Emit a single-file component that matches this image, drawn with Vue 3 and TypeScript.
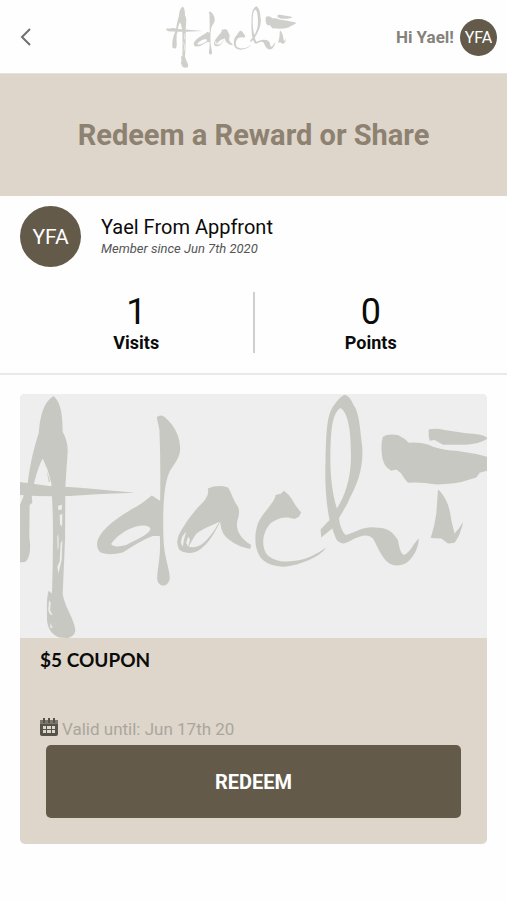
<script setup lang="ts">
interface Stat {
  label: string
  value: number
}

const member = {
  firstName: 'Yael',
  fullName: 'Yael From Appfront',
  initials: 'YFA',
  since: 'Jun 7th 2020',
}

const stats: Stat[] = [
  { label: 'Visits', value: 1 },
  { label: 'Points', value: 0 },
]

const coupon = { title: '$5 COUPON', validUntil: 'Jun 17th 20' }

// Brush strokes of the Adachi mark, shared by the header and the coupon picture.
const brushStrokes: string[] = [
  'M162 48C180 62 190 90 190 155Q206 185 205 215L198 320L197 480L190 640C195 680 225 715 228 750C225 770 210 775 190 773C165 772 145 750 143 720C143 690 141 650 148 632L158 640C160 560 162 480 160 400L156 310L145 270L130 235C115 265 105 300 97 345L99 368L91 375L90 470Q98 530 78 545Q60 550 40 535Q32 440 70 355L85 310C92 250 105 200 118 160C122 110 130 70 162 48ZM176 378L188 374L187 388L177 390ZM181 405L189 402L188 440L182 432ZM174 470L177 462L178 500L175 510ZM184 490L189 480L187 540L182 560L177 580L174 560L181 545ZM149 660L154 668L152 690L160 705L152 702L147 690ZM152 728L160 742L154 744ZM142 270L152 304L148 306Z',
  'M-35 318Q-20 295 0 312Q40 300 62 306L150 318Q240 322 300 328L408 338Q320 340 260 345Q160 352 62 345L10 345Q-20 345 -35 318Z',
  'M472 112Q485 98 505 120C530 145 543 175 542 210C540 245 510 260 502 300C492 340 490 400 492 470C493 530 510 560 511 595C508 612 498 617 488 616Q474 612 473 595C474 560 485 530 481 468L460 468C430 478 400 500 370 517Q330 527 305 518Q288 505 295 480C310 440 360 410 400 385C430 370 445 355 457 346L482 362Q484 250 480 150ZM335 492C350 470 380 445 420 437Q450 433 453 447C450 462 410 480 380 495Q345 505 335 492Z',
  'M625 325Q655 312 685 322C695 335 695 345 712 375Q722 385 717 410C705 440 715 470 755 495L752 507Q715 500 690 480Q665 465 662 425C640 470 620 500 590 515Q560 525 540 510Q528 490 538 465C555 430 590 385 612 365Q630 345 625 325ZM660 425C640 435 610 445 590 462Q575 485 568 500Q590 505 610 490Q635 470 660 425ZM560 454L548 470L544 488L550 500L553 482ZM566 470L560 488L566 500L572 478Z',
  'M828 345L845 340L853 332L868 345C880 360 885 375 905 397L898 410L885 417C860 408 840 412 815 428C792 450 783 490 800 520C815 540 850 548 880 543C930 538 960 515 980 502C970 520 930 545 870 558Q820 565 790 540C765 515 762 470 775 430C790 395 825 370 828 345Z',
  'M1035 44Q1050 46 1062 75C1080 100 1080 140 1088 200C1092 260 1075 310 1050 355C1040 380 1025 400 1018 415C1022 440 1030 460 1040 465C1070 455 1090 440 1125 442C1165 442 1180 455 1195 480C1200 510 1205 520 1212 525C1235 515 1240 490 1258 475C1255 510 1240 530 1225 545Q1205 560 1180 555C1150 545 1140 510 1120 475Q1105 460 1080 470C1060 475 1045 490 1030 490Q1010 485 1007 470L998 445L965 472L963 448L990 420C980 370 975 310 978 240C980 170 980 110 1000 80Q1020 50 1035 44ZM1022 84C1000 100 995 140 993 200C990 280 998 340 1012 385C1035 350 1052 300 1054 240C1055 170 1050 100 1022 84Z',
  'M1150 170Q1165 160 1195 165Q1215 175 1228 188Q1270 185 1300 200Q1340 212 1370 212L1430 222L1462 230Q1500 232 1510 245L1490 255L1462 272L1440 278L1430 292L1405 300Q1370 313 1310 313Q1260 305 1225 308Q1210 290 1205 280L1190 268L1175 272Q1150 260 1147 225Q1143 190 1150 170Z',
  'M1288 148Q1310 143 1335 150L1400 160Q1450 162 1465 175Q1440 192 1400 194L1330 194L1305 180L1290 182Q1285 165 1288 148Z',
  'M1315 328C1340 350 1350 380 1355 420Q1362 450 1365 460Q1380 445 1390 425Q1385 460 1365 488L1345 490L1325 475L1293 474Q1305 440 1310 400Z',
]
</script>

<template>
  <div class="page">
    <header class="topbar">
      <button class="back" type="button" aria-label="Back">
        <svg viewBox="0 0 12 20" width="12" height="20" aria-hidden="true">
          <path d="M10 2 2 10l8 8" fill="none" stroke="currentColor" stroke-width="2" />
        </svg>
      </button>
      <svg class="logo" viewBox="-40 42 1550 735" role="img" aria-label="Adachi">
        <path v-for="(stroke, i) in brushStrokes" :key="i" :d="stroke" />
      </svg>
      <div class="greeting">
        <span>Hi {{ member.firstName }}!</span>
        <span class="avatar avatar-small">{{ member.initials }}</span>
      </div>
    </header>

    <main>
      <h1 class="banner">Redeem a Reward or Share</h1>

      <section class="profile">
        <div class="member">
          <span class="avatar">{{ member.initials }}</span>
          <div>
            <p class="name">{{ member.fullName }}</p>
            <p class="since">Member since {{ member.since }}</p>
          </div>
        </div>
        <dl class="stats">
          <div v-for="stat in stats" :key="stat.label" class="stat">
            <dt>{{ stat.label }}</dt>
            <dd>{{ stat.value }}</dd>
          </div>
        </dl>
      </section>

      <article class="coupon">
        <svg
          class="picture"
          viewBox="62 42 1400 732"
          preserveAspectRatio="xMidYMid slice"
          aria-hidden="true"
        >
          <path v-for="(stroke, i) in brushStrokes" :key="i" :d="stroke" />
        </svg>
        <div class="details">
          <h2>{{ coupon.title }}</h2>
          <p class="valid">
            <svg viewBox="0 0 18 18" width="18" height="18" aria-hidden="true">
              <path fill="#7b786e" d="M0 2h18v5H0z" />
              <path
                fill="#55534b"
                fill-rule="evenodd"
                d="M3 0h2v5H3zM8 0h2v5H8zM13 0h2v5h-2zM0 6h18v10a2 2 0 0 1-2 2H2a2 2 0 0 1-2-2zM3 8v3h3V8zM7 8v3h4V8zM12 8v3h3V8zM3 12v3h3v-3zM7 12v3h4v-3zM12 12v3h3v-3z"
              />
            </svg>
            <span>Valid until: {{ coupon.validUntil }}</span>
          </p>
          <button class="redeem" type="button">REDEEM</button>
        </div>
      </article>
    </main>
  </div>
</template>

<style>
body {
  background: #fefefe;
}
</style>

<style scoped>
.page {
  font-family: Roboto, "Liberation Sans", sans-serif;
  color: #0b0b0b;
}

h1,
h2,
p,
dl,
dd {
  margin: 0;
}

button {
  border: 0;
  font: inherit;
  cursor: pointer;
}

.topbar {
  display: grid;
  grid-template-columns: 8fr 132px 11fr;
  align-items: center;
  box-sizing: border-box;
  height: 74px;
  padding: 1px 10px 0 20px;
  border-bottom: 1px solid #e6e1dc;
}

.back {
  display: flex;
  justify-self: start;
  padding: 0;
  background: none;
  color: #707070;
}

.logo {
  display: block;
  width: 132px;
  height: 62px;
  fill: #cfcfcb;
  fill-rule: evenodd;
}

.greeting {
  display: flex;
  align-items: center;
  justify-content: flex-end;
  gap: 6px;
  color: #85827c;
  font-size: 17px;
  font-weight: 700;
  white-space: nowrap;
}

.avatar {
  display: flex;
  flex: none;
  align-items: center;
  justify-content: center;
  width: 61px;
  height: 61px;
  border-radius: 50%;
  background: #635a4a;
  color: #fff;
  font-size: 21px;
  font-weight: 400;
}

.avatar-small {
  width: 37px;
  height: 37px;
  font-size: 16px;
}

.banner {
  padding: 41px 16px;
  background: #ded6ca;
  color: #8d8171;
  font-size: 29px;
  line-height: 40px;
  text-align: center;
}

.profile {
  padding: 10px 20px 20px;
  border-bottom: 2px solid #e9e9e9;
}

.member {
  display: flex;
  align-items: center;
  gap: 20px;
}

.name {
  font-size: 20px;
  line-height: 24px;
}

.since {
  color: #555;
  font-size: 13px;
  font-style: italic;
  line-height: 20px;
}

.stats {
  display: flex;
  margin-top: 25px;
}

.stat {
  display: flex;
  flex: 1;
  flex-direction: column-reverse;
  align-items: center;
}

.stat + .stat {
  border-left: 2px solid #cfcfcf;
}

.stat dt {
  font-size: 18px;
  font-weight: 700;
  line-height: 20px;
}

.stat dd {
  font-size: 36px;
  line-height: 41px;
}

.coupon {
  margin: 19px 20px;
  overflow: hidden;
  border-radius: 5px;
  background: #ded6ca;
}

.picture {
  display: block;
  width: 100%;
  aspect-ratio: 1400 / 732;
  background: #eee;
  fill: #c8c8c3;
  fill-rule: evenodd;
}

.details {
  padding: 10px 20px 26px;
}

h2 {
  font-family: Lato, "Open Sans", sans-serif;
  font-size: 19px;
  font-weight: 700;
  line-height: 24px;
}

.valid {
  display: flex;
  align-items: flex-start;
  gap: 4px;
  margin-top: 46px;
  color: #aaa69e;
  font-size: 17px;
  line-height: 22px;
}

.redeem {
  display: block;
  width: calc(100% - 12px);
  height: 73px;
  margin: 5px auto 0;
  border-radius: 5px;
  background: #635a4a;
  color: #fff;
  font-size: 20px;
  font-weight: 700;
}
</style>
